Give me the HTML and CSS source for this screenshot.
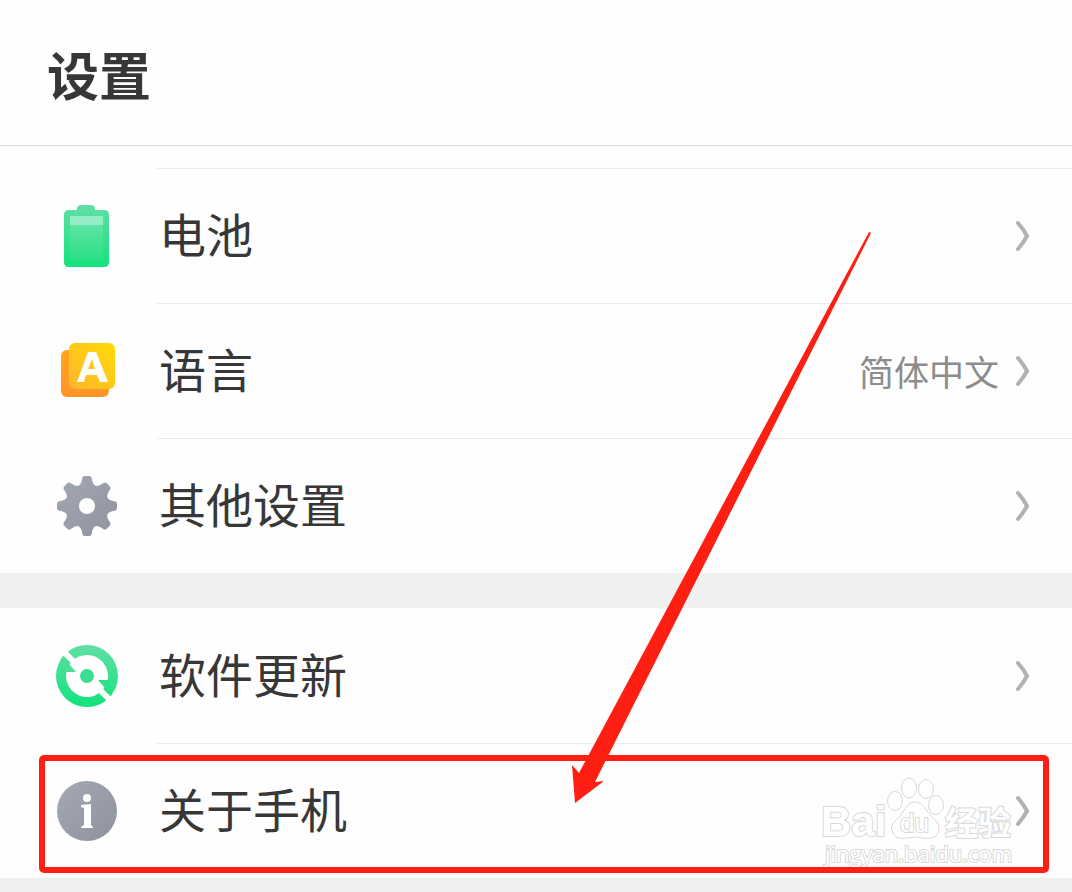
FILE: index.html
```html
<!DOCTYPE html>
<html lang="zh-CN">
<head>
    <meta charset="UTF-8">
    <title>设置</title>
    <link rel="stylesheet" href="styles.css">
</head>
<body>
    <div class="settings">
        <header class="title-bar">
            <h1>设置</h1>
        </header>
        <ul class="group group-top">
            <li>
                <a class="row" href="#">
                    <svg class="icon" viewBox="0 0 64 64">
                        <defs>
                            <linearGradient id="green" x1="0" y1="0" x2="0" y2="1">
                                <stop offset="0" stop-color="#61dfa4"/>
                                <stop offset="1" stop-color="#12e37c"/>
                            </linearGradient>
                            <linearGradient id="cell" x1="0" y1="0" x2="0" y2="1">
                                <stop offset="0" stop-color="#6be4ac"/>
                                <stop offset="1" stop-color="#2be086"/>
                            </linearGradient>
                        </defs>
                        <path d="M22 5Q22 1 26 1H36Q40 1 40 5V6H49Q54 6 54 11V58Q54 63 49 63H14Q9 63 9 58V11Q9 6 14 6H22Z" fill="url(#green)"/>
                        <rect x="15" y="12" width="33" height="44" fill="url(#cell)"/>
                        <rect x="15" y="12" width="33" height="9" fill="#94edc4"/>
                    </svg>
                    <span class="label">电池</span>
                    <svg class="chevron" viewBox="0 0 16 32"><path d="M3 3Q9 10 12 16Q9 22 3 29"/></svg>
                </a>
            </li>
            <li>
                <a class="row" href="#">
                    <svg class="icon" viewBox="0 0 64 64">
                        <defs>
                            <linearGradient id="orange" x1="0" y1="0" x2="0" y2="1">
                                <stop offset="0" stop-color="#ffa51e"/>
                                <stop offset="1" stop-color="#ff9428"/>
                            </linearGradient>
                            <linearGradient id="yellow" x1="1" y1="0" x2="0" y2="1">
                                <stop offset="0" stop-color="#ffdc08"/>
                                <stop offset="1" stop-color="#ffb42c"/>
                            </linearGradient>
                        </defs>
                        <rect x="6" y="11" width="48" height="47" rx="6" fill="url(#orange)"/>
                        <rect x="14" y="4" width="46" height="46" rx="6" fill="url(#yellow)"/>
                        <path d="M22 43L33 13H41L53 43H45L42 36H31L29 43ZM33 30H40L37 20Z" fill="#fff" fill-rule="evenodd"/>
                    </svg>
                    <span class="label">语言</span>
                    <span class="value">简体中文</span>
                    <svg class="chevron" viewBox="0 0 16 32"><path d="M3 3Q9 10 12 16Q9 22 3 29"/></svg>
                </a>
            </li>
            <li>
                <a class="row" href="#">
                    <svg class="icon" viewBox="0 0 64 64">
                        <defs>
                            <linearGradient id="gray" x1="0" y1="0" x2="1" y2="1">
                                <stop offset="0" stop-color="#a4a9b4"/>
                                <stop offset="1" stop-color="#8d929e"/>
                            </linearGradient>
                            <g id="tooth">
                                <path d="M22 13Q26 11 27 6Q27 2 30 2H34Q37 2 37 6Q38 11 42 13L40 22H24Z"/>
                            </g>
                            <mask id="gear">
                                <g fill="#fff">
                                    <circle cx="32" cy="32" r="22"/>
                                    <use href="#tooth"/>
                                    <use href="#tooth" transform="rotate(45 32 32)"/>
                                    <use href="#tooth" transform="rotate(90 32 32)"/>
                                    <use href="#tooth" transform="rotate(135 32 32)"/>
                                    <use href="#tooth" transform="rotate(180 32 32)"/>
                                    <use href="#tooth" transform="rotate(225 32 32)"/>
                                    <use href="#tooth" transform="rotate(270 32 32)"/>
                                    <use href="#tooth" transform="rotate(315 32 32)"/>
                                </g>
                                <circle cx="32" cy="32" r="8" fill="#000"/>
                            </mask>
                        </defs>
                        <rect width="64" height="64" fill="url(#gray)" mask="url(#gear)"/>
                    </svg>
                    <span class="label">其他设置</span>
                    <svg class="chevron" viewBox="0 0 16 32"><path d="M3 3Q9 10 12 16Q9 22 3 29"/></svg>
                </a>
            </li>
        </ul>
        <ul class="group">
            <li>
                <a class="row" href="#">
                    <svg class="icon" viewBox="0 0 64 64">
                        <circle cx="32" cy="32" r="31" fill="url(#green)"/>
                        <circle cx="32" cy="32" r="21" fill="#fff"/>
                        <path d="M8 7L22 21M56 57L42 43" stroke="#fff" stroke-width="6"/>
                        <path d="M7 12L21 28H10Z" fill="#4cdd99"/>
                        <path d="M57 52L43 36H54Z" fill="#2be088"/>
                        <circle cx="32" cy="32" r="7" fill="#3cdf92"/>
                    </svg>
                    <span class="label">软件更新</span>
                    <svg class="chevron" viewBox="0 0 16 32"><path d="M3 3Q9 10 12 16Q9 22 3 29"/></svg>
                </a>
            </li>
            <li class="marked">
                <a class="row" href="#">
                    <svg class="icon" viewBox="0 0 64 64">
                        <circle cx="32" cy="32" r="30" fill="url(#gray)"/>
                        <circle cx="32" cy="19" r="4" fill="#fff"/>
                        <path d="M26 26L36 25V46L38 48V49H26V48L29 46V29L26 28Z" fill="#fff"/>
                    </svg>
                    <span class="label">关于手机</span>
                    <svg class="chevron" viewBox="0 0 16 32"><path d="M3 3Q9 10 12 16Q9 22 3 29"/></svg>
                </a>
                <!-- 水印 -->
                <svg class="watermark" viewBox="0 0 200 100">
                    <g class="paw">
                        <ellipse cx="75" cy="26" rx="7.5" ry="9.5"/>
                        <ellipse cx="89" cy="13" rx="7.5" ry="10"/>
                        <ellipse cx="106" cy="14" rx="7.5" ry="9.5"/>
                        <ellipse cx="116" cy="30" rx="7.5" ry="9.5"/>
                        <path d="M95 27Q102 27 107 36Q112 42 116 46Q121 52 118 58Q114 65 103 63Q95 61 87 63Q76 65 73 58Q69 51 76 45Q81 41 84 35Q89 27 95 27Z"/>
                    </g>
                    <text class="brand" x="1" y="61">Bai</text>
                    <text class="du" x="80" y="57">du</text>
                    <text class="brand-cn" x="125" y="60">经验</text>
                    <text class="site" x="5" y="87">jingyan.baidu.com</text>
                </svg>
            </li>
        </ul>
        <svg class="arrow" viewBox="0 0 302 574">
            <path d="M299 2L301 3L51 500L25 552L34 551L5 573L2 535L9 543L32 500Z"/>
        </svg>
    </div>
</body>
</html>
```
FILE: styles.css
```css
*{
    margin: 0;
    padding: 0;
    box-sizing: border-box;
    list-style: none;
}
body{
    background-color: #f0f0f0;
    color: #373737;
    font-family: "Noto Sans CJK SC", sans-serif;
}
.settings{
    position: relative;
    min-height: 100vh;
}
.title-bar{
    height: 146px;
    padding: 36px 47px;
    background-color: #fefefe;
    border-bottom: 1px solid #d8d8d8;
}
.title-bar h1{
    font-size: 52px;
    line-height: 76px;
    font-weight: bold;
}
.group{
    margin-bottom: 35px;
    background-color: #fefefe;
}
.group-top{
    padding-top: 22px;
}
.group li{
    position: relative;
}
.row{
    display: flex;
    align-items: center;
    height: 135px;
    padding: 0 41px 0 55px;
    color: #373737;
    text-decoration: none;
}
/* 分隔线从文字处开始 */
.group-top li::before, .group li + li::before{
    content: "";
    position: absolute;
    top: 0;
    left: 157px;
    right: 0;
    height: 1px;
    background-color: #ebebeb;
}
.icon{
    width: 64px;
    height: 64px;
    flex: none;
}
.label{
    flex: 1;
    margin-left: 40px;
    padding-bottom: 6px;
    font-size: 47px;
    line-height: 64px;
}
.value{
    margin-right: 16px;
    font-size: 35px;
    line-height: 48px;
    color: #8c8c8c;
}
.chevron{
    width: 16px;
    height: 32px;
    flex: none;
    fill: none;
    stroke: #b2b2b2;
    stroke-width: 4;
    stroke-linecap: round;
}
/* 红框 */
.marked::after{
    content: "";
    position: absolute;
    top: 12px;
    right: 23px;
    bottom: 5px;
    left: 39px;
    border: 6px solid #ff1f12;
    border-radius: 5px;
}
.watermark{
    position: absolute;
    top: 32px;
    right: 52px;
    width: 200px;
    height: 100px;
    fill: #fff;
    stroke: #d8d8d8;
    stroke-width: 1;
    font-family: "Open Sans", "Noto Sans CJK SC", sans-serif;
}
.watermark text{
    paint-order: stroke;
    stroke-width: 2;
}
.watermark .brand{
    font-family: "Liberation Sans", sans-serif;
    font-size: 42px;
    font-weight: bold;
}
.watermark .du{
    font-family: "Liberation Sans", sans-serif;
    font-size: 26px;
}
.watermark .brand-cn{
    font-size: 33px;
    font-weight: bold;
}
.watermark .site{
    font-size: 22px;
}
.arrow{
    position: absolute;
    top: 230px;
    right: 200px;
    width: 302px;
    height: 574px;
    fill: #ff1f12;
    pointer-events: none;
}
```
